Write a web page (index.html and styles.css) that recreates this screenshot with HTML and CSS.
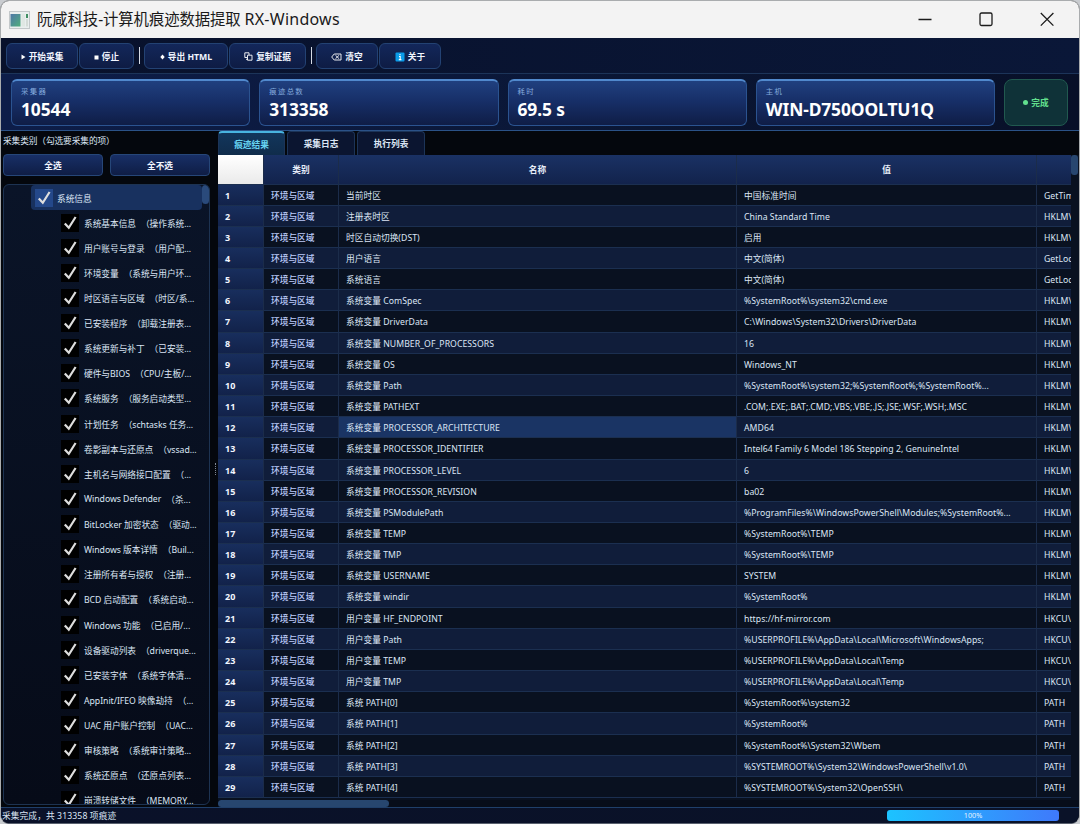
FILE: index.html
```html
<!DOCTYPE html>
<html lang="zh-CN">
<head>
  <meta charset="UTF-8">
  <meta name="viewport" content="width=device-width, initial-scale=1.0">
  <title>阮咸科技-计算机痕迹数据提取 RX-Windows</title>
  <link rel="stylesheet" href="styles.css">
</head>
<body>
  <div class="window">
    <header class="title-bar">
      <svg class="app-icon" width="21" height="18" viewBox="0 0 21 18">
        <defs>
          <linearGradient id="appGrad" x1="0" y1="0" x2="1" y2="1">
            <stop offset="0" stop-color="#4f78a8"/>
            <stop offset="1" stop-color="#4fae7c"/>
          </linearGradient>
        </defs>
        <rect x="0.5" y="0.5" width="20" height="17" fill="#e9eeee" stroke="#c3c8ca"/>
        <rect x="1.5" y="3" width="10" height="12.5" fill="url(#appGrad)"/>
        <rect x="12.5" y="3" width="3.5" height="12.5" fill="#dfe7e3"/>
        <rect x="17" y="3" width="2" height="4" fill="#3f8f63"/>
        <rect x="17" y="8" width="2" height="7.5" fill="#d3dbd7"/>
      </svg>
      <h1>阮咸科技-计算机痕迹数据提取 <span class="latin">RX-Windows</span></h1>
      <div class="window-controls">
        <svg width="16" height="16" viewBox="0 0 16 16"><path d="M1.5 7.5h13"/></svg>
        <svg width="16" height="16" viewBox="0 0 16 16"><rect x="2" y="1" width="12" height="12.5" rx="1.5"/></svg>
        <svg width="16" height="16" viewBox="0 0 16 16"><path d="M1.8 1l12.6 12.6M14.4 1L1.8 13.6"/></svg>
      </div>
    </header>

    <nav class="toolbar">
      <button class="tool-btn w-start"><svg width="5" height="6" viewBox="0 0 5 6"><path d="M0.5 0.5L4.5 3L0.5 5.5z" fill="#fff"/></svg>开始采集</button>
      <button class="tool-btn w-stop"><svg width="5" height="6" viewBox="0 0 5 6"><rect x="0.5" y="1.5" width="4" height="4" fill="#fff"/></svg>停止</button>
      <span class="separator"></span>
      <button class="tool-btn w-export"><svg width="5" height="6" viewBox="0 0 5 6"><path d="M2.5 0.5L4.7 3L2.5 5.5L0.3 3z" fill="#fff"/></svg>导出 HTML</button>
      <button class="tool-btn w-copy"><svg width="9" height="9" viewBox="0 0 9 9" fill="none" stroke="#fff" stroke-width="0.9"><path d="M3 5.5H0.8V0.8H5V3"/><path d="M3.5 3.2H8v5H3.5zM2 7.3h1.5"/></svg>复制证据</button>
      <span class="separator"></span>
      <button class="tool-btn w-clear"><svg width="11" height="8" viewBox="0 0 11 8" fill="none" stroke="#fff" stroke-width="0.9"><path d="M3.2 1H10v6H3.2L0.7 4zM4.5 2.3l3.6 3.4M8.1 2.3L4.5 5.7"/></svg>清空</button>
      <button class="tool-btn w-about"><svg width="10" height="10" viewBox="0 0 10 10"><rect x="0.5" y="0.5" width="9" height="9" rx="1" fill="#0a9be8"/><path d="M5 2v1.2M4 4.5h1.2V7.5M3.8 7.6h2.6" stroke="#fff" stroke-width="1.1" fill="none"/></svg>关于</button>
    </nav>

    <section class="stats">
      <div class="card"><span class="card-label">采集器</span><strong>10544</strong></div>
      <div class="card"><span class="card-label">痕迹总数</span><strong>313358</strong></div>
      <div class="card"><span class="card-label">耗时</span><strong>69.5 s</strong></div>
      <div class="card"><span class="card-label">主机</span><strong>WIN-D750OOLTU1Q</strong></div>
      <div class="state"><i class="state-dot"></i>完成</div>
    </section>

    <main class="content">
      <aside class="sidebar">
        <p class="side-title">采集类别（勾选要采集的项）</p>
        <div class="side-btns">
          <button class="side-btn">全选</button>
          <button class="side-btn">全不选</button>
        </div>
        <div class="tree">
          <div class="tree-list" id="tree"></div>
          <div class="tree-scroll"></div>
        </div>
      </aside>
      <div class="splitter"><i></i></div>
      <section class="results">
        <div class="tabs">
          <div class="tab active">痕迹结果</div>
          <div class="tab">采集日志</div>
          <div class="tab">执行列表</div>
        </div>
        <div class="table-area">
          <div class="table" id="table">
            <div class="row head">
              <span class="corner"></span><span>类别</span><span>名称</span><span>值</span><span></span>
            </div>
          </div>
          <div class="v-scroll"></div>
        </div>
        <div class="h-scroll"><i></i></div>
      </section>
    </main>

    <footer class="status-bar">
      <span>采集完成，共 313358 项痕迹</span>
      <div class="progress">100%</div>
    </footer>
  </div>

  <script src="script.js"></script>
</body>
</html>
```
FILE: script.js
```js
const categories = [
  ['系统基本信息', '（操作系统...'],
  ['用户账号与登录', '（用户配...'],
  ['环境变量', '（系统与用户环...'],
  ['时区语言与区域', '（时区/系...'],
  ['已安装程序', '（卸载注册表...'],
  ['系统更新与补丁', '（已安装...'],
  ['硬件与BIOS', '（CPU/主板/...'],
  ['系统服务', '（服务启动类型...'],
  ['计划任务', '（schtasks 任务...'],
  ['卷影副本与还原点', '（vssad...'],
  ['主机名与网络接口配置', '（...'],
  ['Windows Defender', '（杀...'],
  ['BitLocker 加密状态', '（驱动...'],
  ['Windows 版本详情', '（Buil...'],
  ['注册所有者与授权', '（注册...'],
  ['BCD 启动配置', '（系统启动...'],
  ['Windows 功能', '（已启用/...'],
  ['设备驱动列表', '（driverque...'],
  ['已安装字体', '（系统字体清...'],
  ['AppInit/IFEO 映像劫持', '（...'],
  ['UAC 用户账户控制', '（UAC...'],
  ['审核策略', '（系统审计策略...'],
  ['系统还原点', '（还原点列表...'],
  ['崩溃转储文件', '（MEMORY...']
];

const records = [
  ['当前时区', '中国标准时间', 'GetTim'],
  ['注册表时区', 'China Standard Time', 'HKLM\\'],
  ['时区自动切换(DST)', '启用', 'HKLM\\'],
  ['用户语言', '中文(简体)', 'GetLoc'],
  ['系统语言', '中文(简体)', 'GetLoc'],
  ['系统变量 ComSpec', '%SystemRoot%\\system32\\cmd.exe', 'HKLM\\'],
  ['系统变量 DriverData', 'C:\\Windows\\System32\\Drivers\\DriverData', 'HKLM\\'],
  ['系统变量 NUMBER_OF_PROCESSORS', '16', 'HKLM\\'],
  ['系统变量 OS', 'Windows_NT', 'HKLM\\'],
  ['系统变量 Path', '%SystemRoot%\\system32;%SystemRoot%;%SystemRoot%...', 'HKLM\\'],
  ['系统变量 PATHEXT', '.COM;.EXE;.BAT;.CMD;.VBS;.VBE;.JS;.JSE;.WSF;.WSH;.MSC', 'HKLM\\'],
  ['系统变量 PROCESSOR_ARCHITECTURE', 'AMD64', 'HKLM\\'],
  ['系统变量 PROCESSOR_IDENTIFIER', 'Intel64 Family 6 Model 186 Stepping 2, GenuineIntel', 'HKLM\\'],
  ['系统变量 PROCESSOR_LEVEL', '6', 'HKLM\\'],
  ['系统变量 PROCESSOR_REVISION', 'ba02', 'HKLM\\'],
  ['系统变量 PSModulePath', '%ProgramFiles%\\WindowsPowerShell\\Modules;%SystemRoot%...', 'HKLM\\'],
  ['系统变量 TEMP', '%SystemRoot%\\TEMP', 'HKLM\\'],
  ['系统变量 TMP', '%SystemRoot%\\TEMP', 'HKLM\\'],
  ['系统变量 USERNAME', 'SYSTEM', 'HKLM\\'],
  ['系统变量 windir', '%SystemRoot%', 'HKLM\\'],
  ['用户变量 HF_ENDPOINT', 'https://hf-mirror.com', 'HKCU\\'],
  ['用户变量 Path', '%USERPROFILE%\\AppData\\Local\\Microsoft\\WindowsApps;', 'HKCU\\'],
  ['用户变量 TEMP', '%USERPROFILE%\\AppData\\Local\\Temp', 'HKCU\\'],
  ['用户变量 TMP', '%USERPROFILE%\\AppData\\Local\\Temp', 'HKCU\\'],
  ['系统 PATH[0]', '%SystemRoot%\\system32', 'PATH'],
  ['系统 PATH[1]', '%SystemRoot%', 'PATH'],
  ['系统 PATH[2]', '%SystemRoot%\\System32\\Wbem', 'PATH'],
  ['系统 PATH[3]', '%SYSTEMROOT%\\System32\\WindowsPowerShell\\v1.0\\', 'PATH'],
  ['系统 PATH[4]', '%SYSTEMROOT%\\System32\\OpenSSH\\', 'PATH']
];

const check = '<svg class="check" width="18" height="18" viewBox="0 0 18 18"><path d="M3.8 9.4L7.8 13.8L14.6 3"/></svg>';

document.getElementById('tree').innerHTML =
  `<div class="tree-item parent">${check}<span>系统信息</span></div>` +
  categories.map(([name, hint]) =>
    `<div class="tree-item">${check}<span>${name}</span><span class="hint">${hint}</span></div>`
  ).join('');

const table = document.getElementById('table');
records.forEach(([name, value, source], i) => {
  const row = document.createElement('div');
  row.className = i === 11 ? 'row hovered' : 'row';
  [i + 1, '环境与区域', name, value, source].forEach(text => {
    const cell = document.createElement('span');
    cell.textContent = text;
    row.appendChild(cell);
  });
  table.appendChild(row);
});
```
FILE: styles.css
```css
* {
  box-sizing: border-box;
}

body {
  margin: 0;
  height: 824px;
  overflow: hidden;
  background: #c9ccd0;
  font-family: "Noto Sans", "Noto Sans CJK SC", sans-serif;
  font-size: 8.7px;
  color: #dce6f5;
}

button {
  font: inherit;
  font-weight: bold;
  color: #f2f6ff;
  padding: 0;
}

.window {
  width: 1080px;
  height: 824px;
  display: flex;
  flex-direction: column;
  border: 1px solid #a9acae;
  border-bottom-color: #59606e;
  border-radius: 9px;
  overflow: hidden;
  background: #04070d;
}

/* title bar */
.title-bar {
  height: 37px;
  flex: none;
  display: flex;
  align-items: center;
  padding: 0 24px 0 8px;
  background: #f3f3f3;
  color: #1a1a1a;
}

.title-bar h1 {
  margin: 0 0 0 7px;
  font-size: 15.4px;
  font-weight: normal;
  line-height: 20px;
  letter-spacing: -0.1px;
  white-space: nowrap;
}

.title-bar .latin {
  font-family: "Noto Sans", sans-serif;
  font-size: 16px;
  letter-spacing: 0.25px;
}

.window-controls {
  margin-left: auto;
  display: flex;
  gap: 45px;
}

.window-controls svg {
  fill: none;
  stroke: #1b1b1b;
  stroke-width: 1.3;
}

/* toolbar */
.toolbar {
  height: 36px;
  flex: none;
  display: flex;
  align-items: center;
  padding-left: 5px;
  background: linear-gradient(to right, #08112b, #0a1738);
  border-bottom: 1px solid #1c3459;
}

.tool-btn {
  height: 26px;
  display: flex;
  align-items: center;
  justify-content: center;
  gap: 3px;
  margin-right: 1px;
  padding-top: 2px;
  border: 1px solid #234273;
  border-radius: 6px;
  background: linear-gradient(#13275a, #0e1c44);
}

.w-start { width: 72px; }
.w-stop { width: 55px; }
.w-export { width: 84px; }
.w-copy { width: 77px; }
.w-clear { width: 62px; }
.w-about { width: 62px; }

.separator {
  width: 1.5px;
  height: 17px;
  margin: 0 4px 0 3.5px;
  background: #d5dbe6;
}

/* counters */
.stats {
  height: 57px;
  flex: none;
  display: flex;
  gap: 9px;
  padding: 5px 11px 4px 10px;
  background: linear-gradient(to right, #0d1d49, #0a1634 60%, #081028);
  border-bottom: 1px solid #2b5287;
}

.card {
  flex: 1;
  display: flex;
  flex-direction: column;
  height: 47px;
  padding: 6px 9px 0;
  border: 1px solid #2b5390;
  border-top: 2px solid #5189cd;
  border-radius: 6px;
  background: linear-gradient(#20407f, #172f68 45%, #0f1d46);
}

.card-label {
  font-size: 7.4px;
  line-height: 9px;
  letter-spacing: 1.3px;
  color: #83a9dd;
}

.card strong {
  font-family: "Noto Sans", sans-serif;
  font-size: 17.4px;
  line-height: 26px;
  color: #fff;
  letter-spacing: -0.1px;
}

.state {
  width: 64px;
  height: 47px;
  display: flex;
  align-items: center;
  justify-content: center;
  gap: 3px;
  border: 1px solid #21594f;
  border-radius: 8px;
  background: #0f3238;
  color: #62e08e;
  font-weight: bold;
}

.state-dot {
  width: 5px;
  height: 5px;
  border-radius: 50%;
  background: #62e08e;
}

/* main area */
.content {
  flex: 1;
  min-height: 0;
  display: flex;
}

.sidebar {
  width: 209px;
  flex: none;
  display: flex;
  flex-direction: column;
  padding-left: 2px;
}

.side-title {
  margin: 3px 0 7px;
  line-height: 14px;
  height: 13px;
  letter-spacing: -0.1px;
}

.side-btns {
  display: flex;
  gap: 7px;
  margin-bottom: 8px;
}

.side-btn {
  flex: 1;
  height: 22px;
  border: 1px solid #264678;
  border-radius: 4px;
  background: linear-gradient(#182f66, #0f1d45);
}

.tree {
  height: 621px;
  display: flex;
  border: 1px solid #1d3352;
  border-radius: 6px;
  background: linear-gradient(#0a1428, #060b18);
  overflow: hidden;
}

.tree-list {
  flex: 1;
  min-width: 0;
}

.tree-scroll {
  width: 7px;
  height: 19px;
  border-radius: 4px;
  background: #2a4a7b;
}

.tree-item {
  height: 25.13px;
  margin-left: 57px;
  display: flex;
  align-items: center;
  white-space: nowrap;
}

.tree-item span {
  margin-left: 5px;
  padding-top: 1px;
  letter-spacing: -0.03px;
}

.tree-item .hint {
  margin-left: 5px;
}

.tree-item.parent {
  margin-left: 27px;
  padding-left: 4px;
  height: 25px;
  border-radius: 4px;
  background: #18315f;
}

.parent span {
  margin-left: 4px;
}

.check {
  flex: none;
  background: #000;
  fill: none;
  stroke: #dedede;
  stroke-width: 2.2;
}

.parent .check {
  background: #24488a;
}

.splitter {
  width: 8px;
  flex: none;
  display: flex;
  align-items: center;
  justify-content: center;
}

.splitter i {
  height: 12px;
  margin-left: 3px;
  border-left: 1px dotted #7f8794;
}

/* results */
.results {
  flex: 1;
  min-width: 0;
  display: flex;
  flex-direction: column;
}

.tabs {
  height: 24px;
  display: flex;
  gap: 2px;
}

.tab {
  width: 68px;
  display: flex;
  align-items: center;
  justify-content: center;
  border: 1px solid #1c3458;
  border-bottom: none;
  border-radius: 4px 4px 0 0;
  background: #0b1530;
  font-weight: bold;
}

.tab.active {
  width: 67px;
  border-top: 2px solid #48b4e0;
  background: linear-gradient(#12365c, #102c4b);
  color: #67d4f2;
}

.table-area {
  height: 645px;
  display: flex;
  background: #091120;
}

.table {
  width: 853px;
  overflow: hidden;
}

.v-scroll {
  width: 7px;
  height: 20px;
  border-radius: 3px;
  background: #27466f;
}

.row {
  height: 21.16px;
  display: grid;
  grid-template-columns: 46px 75px 398px 300px 34px;
  background: #091120;
}

.row span {
  padding-left: 7px;
  line-height: 22px;
  white-space: nowrap;
  overflow: hidden;
  border-right: 1px solid #1b2c4a;
  border-bottom: 1px solid #1b2f50;
}

.row span:nth-child(n+3) {
  letter-spacing: 0.04px;
}

.row span:last-child {
  border-right: none;
}

.row:nth-child(odd) {
  background: #101d3a;
}

.row span:first-child {
  background: linear-gradient(#182e5d, #12224a);
  color: #f2f6ff;
  font-weight: bold;
  font-size: 9px;
}

.row span:nth-child(2) {
  color: #bccbfa;
  font-weight: 500;
}

.row.hovered span:nth-child(3) {
  background: #1a3464;
}

.row.head {
  height: 29.5px;
  background: linear-gradient(#1a3164, #12224b);
}

.row.head span {
  padding: 0;
  line-height: 31px;
  text-align: center;
  color: #e6edf9;
  font-weight: bold;
}

.row.head .corner {
  background: linear-gradient(#fff, #eaeaea);
}

.h-scroll {
  height: 7px;
  background: #070d1a;
}

.h-scroll i {
  display: block;
  width: 171px;
  height: 7px;
  border-radius: 4px;
  background: #27466f;
}

/* status bar */
.status-bar {
  height: 16px;
  flex: none;
  display: flex;
  align-items: center;
  justify-content: space-between;
  padding: 0 20px 0 1px;
  background: linear-gradient(to right, #0a1129, #0a1228);
  border-top: 1px solid #1f3f6a;
}

.status-bar span {
  letter-spacing: 0.1px;
}

.progress {
  width: 172px;
  height: 11px;
  border-radius: 3px;
  background: linear-gradient(to right, #1cc3ff, #3f79fb);
  color: #e4f1ff;
  font-size: 7.3px;
  line-height: 11px;
  text-align: center;
}
```
